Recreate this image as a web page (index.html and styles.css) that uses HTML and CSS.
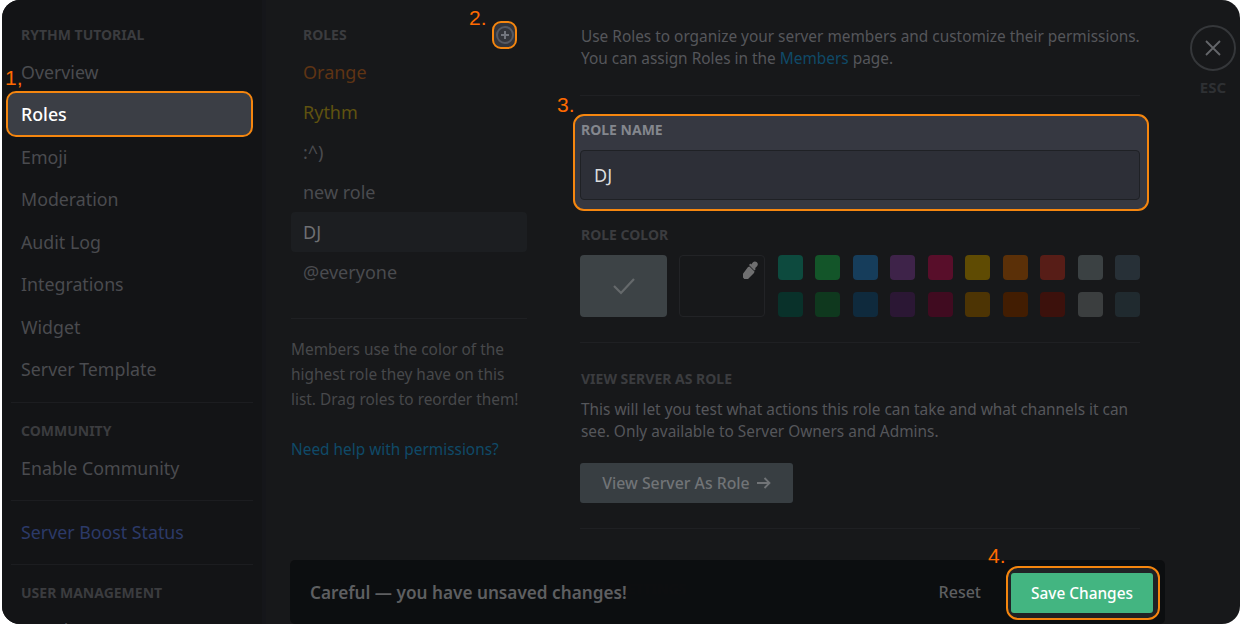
FILE: index.html
```
<html>
<head>
    <title>Server Settings</title>
    <link rel="stylesheet" href="styles.css">
</head>
<body>
    <div class="app">
        <nav class="sidebar">
            <div class="nav-group">
                <h2 class="heading nav-heading">RYTHM TUTORIAL</h2>
                <a class="nav-item">Overview</a>
                <a class="nav-item active">Roles</a>
                <a class="nav-item">Emoji</a>
                <a class="nav-item">Moderation</a>
                <a class="nav-item">Audit Log</a>
                <a class="nav-item">Integrations</a>
                <a class="nav-item">Widget</a>
                <a class="nav-item">Server Template</a>
            </div>
            <div class="nav-group">
                <h2 class="heading nav-heading">COMMUNITY</h2>
                <a class="nav-item">Enable Community</a>
            </div>
            <div class="nav-group">
                <a class="nav-item boost">Server Boost Status</a>
            </div>
            <div class="nav-group">
                <h2 class="heading nav-heading">USER MANAGEMENT</h2>
                <a class="nav-item">Members</a>
            </div>
        </nav>
        <div class="scroll-strip"></div>

        <section class="roles">
            <div class="roles-head">
                <h2 class="heading">ROLES</h2>
                <button class="add-role">
                    <svg width="20" height="20" viewBox="0 0 20 20">
                        <circle cx="10" cy="10" r="8" fill="none" stroke="#565962" stroke-width="2"/>
                        <path d="M10 6v8M6 10h8" stroke="#72757e" stroke-width="2"/>
                    </svg>
                </button>
            </div>
            <ul class="role-list">
                <li class="role-orange">Orange</li>
                <li class="role-gold">Rythm</li>
                <li>:^)</li>
                <li>new role</li>
                <li class="selected">DJ</li>
                <li>@everyone</li>
            </ul>
            <p class="roles-help">Members use the color of the highest role they have on this list. Drag roles to reorder them!</p>
            <a class="help-link">Need help with permissions?</a>
        </section>

        <main class="content">
            <p class="intro">Use Roles to organize your server members and customize their permissions. You can assign Roles in the <a class="link">Members</a> page.</p>

            <div class="name-box">
                <h2 class="heading name-label">ROLE NAME</h2>
                <div class="name-input">DJ</div>
            </div>

            <h2 class="heading color-label">ROLE COLOR</h2>
            <div class="color-row">
                <div class="color-default">
                    <svg width="24" height="18" viewBox="0 0 24 18">
                        <path d="M2 9l7 7L22 2" fill="none" stroke="#65696b" stroke-width="2.200"/>
                    </svg>
                </div>
                <div class="color-custom">
                    <svg class="dropper" width="18" height="18" viewBox="0 0 18 18">
                        <path d="M11 1.200c1-1 2.600-1.200 3.900.1s1.100 2.900.1 3.900l-2 2 .8.8-1.400 1.400-5.400-5.400 1.400-1.400.8.8zM6 6l1.500-.5 5 5-.5 1.500-6.200 6.200H2.500L1 16.500v-3.800z" fill="#6f6f70"/>
                    </svg>
                </div>
                <div class="swatches">
                    <span class="swatch" style="background:#0d4a3e"></span>
                    <span class="swatch" style="background:#135529"></span>
                    <span class="swatch" style="background:#163d5b"></span>
                    <span class="swatch" style="background:#3e2349"></span>
                    <span class="swatch" style="background:#580e2a"></span>
                    <span class="swatch" style="background:#5f4b03"></span>
                    <span class="swatch" style="background:#5b3008"></span>
                    <span class="swatch" style="background:#571d17"></span>
                    <span class="swatch" style="background:#3b4143"></span>
                    <span class="swatch" style="background:#273037"></span>
                    <span class="swatch" style="background:#09312a"></span>
                    <span class="swatch" style="background:#0f381e"></span>
                    <span class="swatch" style="background:#0f2a3d"></span>
                    <span class="swatch" style="background:#2b1734"></span>
                    <span class="swatch" style="background:#400b20"></span>
                    <span class="swatch" style="background:#4d3404"></span>
                    <span class="swatch" style="background:#421d02"></span>
                    <span class="swatch" style="background:#3c110c"></span>
                    <span class="swatch" style="background:#3b3e3f"></span>
                    <span class="swatch" style="background:#202a2f"></span>
                </div>
            </div>

            <div class="view-as">
                <h2 class="heading">VIEW SERVER AS ROLE</h2>
                <p class="view-text">This will let you test what actions this role can take and what channels it can see. Only available to Server Owners and Admins.</p>
                <button class="view-btn">
                    View Server As Role
                    <svg width="14" height="12" viewBox="0 0 14 12">
                        <path d="M0 6h12.500M7.500 1l5 5-5 5" fill="none" stroke="#717477" stroke-width="1.800"/>
                    </svg>
                </button>
            </div>

            <h2 class="heading settings-label">ROLE SETTINGS</h2>
        </main>

        <aside class="esc">
            <div class="esc-circle">
                <svg width="18" height="18" viewBox="0 0 18 18">
                    <path d="M2 2l14 14M16 2L2 16" stroke="#64666a" stroke-width="1.800"/>
                </svg>
            </div>
            <span class="esc-text">ESC</span>
        </aside>

        <div class="save-bar">
            <span class="save-msg">Careful — you have unsaved changes!</span>
            <span class="reset">Reset</span>
            <div class="save-ring"><button class="save-btn">Save Changes</button></div>
        </div>

        <span class="note note-1">1,</span>
        <span class="note note-2">2.</span>
        <span class="note note-3">3.</span>
        <span class="note note-4">4.</span>
    </div>
</body>
</html>
```

FILE: styles.css
```
* {
    box-sizing: border-box;
}
html, body {
    margin: 0;
    padding: 0;
    height: 100%;
    background: #fff;
    overflow: hidden;
}
body {
    font-family: "Noto Sans", sans-serif;
    padding: 0 2px;
}
h2, p, ul {
    margin: 0;
    padding: 0;
}
.app {
    position: relative;
    display: flex;
    width: 1238px;
    height: 624px;
    background: #17181a;
    border-radius: 18px;
    overflow: hidden;
}
.heading {
    font-size: 14px;
    line-height: 16px;
    font-weight: 700;
    color: #3b3c3f;
    white-space: nowrap;
}

/* left nav */
.sidebar {
    width: 260px;
    flex: none;
    background: #131416;
    padding: 27px 9px 0 9px;
    overflow: hidden;
}
.nav-group {
    border-bottom: 1px solid #1c1d20;
    padding-bottom: 7px;
    margin-bottom: 20px;
}
.nav-heading {
    padding-left: 10px;
    margin-bottom: 12px;
}
.nav-item {
    display: flex;
    align-items: center;
    height: 34px;
    margin-bottom: 8.500px;
    padding-left: 10px;
    font-size: 17.800px;
    color: #4a4b4f;
    white-space: nowrap;
}
.nav-item.active {
    height: 46px;
    margin: -7px 0 3.200px -5px;
    padding-left: 13px;
    color: #fff;
    font-weight: 500;
    background: #3b3e45;
    border: 2px solid #f5860f;
    border-radius: 10px;
}
.nav-item.boost {
    margin-top: -6px;
    margin-bottom: 7.500px;
    color: #2c3a68;
}
.scroll-strip {
    width: 4px;
    flex: none;
    background: #15161a;
}

/* roles column */
.roles {
    width: 261px;
    flex: none;
    padding: 27px 0 0 25px;
}
.roles-head {
    position: relative;
    padding-left: 12px;
    margin-bottom: 9px;
}
.add-role {
    position: absolute;
    left: 201px;
    top: -6px;
    width: 25px;
    height: 28px;
    padding: 0;
    display: flex;
    align-items: center;
    justify-content: center;
    background: #33353c;
    border: 2px solid #f5860f;
    border-radius: 9px;
}
.role-list {
    list-style: none;
    border-bottom: 1px solid #1f2023;
    padding-bottom: 26px;
    width: 236px;
}
.role-list li {
    height: 40px;
    line-height: 40px;
    padding-left: 12px;
    font-size: 18px;
    color: #4a4b4f;
}
.role-list .selected {
    background: #1c1e21;
    border-radius: 4px;
    color: #6e6f72;
}
.role-list .role-orange {
    color: #5f3414;
}
.role-list .role-gold {
    color: #5f5210;
}
.roles-help {
    width: 236px;
    margin-top: 18px;
    font-size: 15.400px;
    line-height: 25px;
    color: #47484b;
}
.help-link {
    display: block;
    margin-top: 25px;
    font-size: 15.400px;
    line-height: 25px;
    color: #0f4a68;
    white-space: nowrap;
}

/* main column */
.content {
    width: 560px;
    flex: none;
    padding-top: 26px;
    margin-left: 53px;
}
.intro {
    font-size: 15.400px;
    line-height: 22px;
    color: #55565a;
    padding-bottom: 25px;
    border-bottom: 1px solid #1f2023;
    margin-bottom: 18px;
}
.link {
    color: #0f4a68;
}
.name-box {
    margin: 0 -9px 0 -7px;
    padding: 6px 7px 10px 5px;
    height: 97px;
    background: #363841;
    border: 2px solid #f5860f;
    border-radius: 11px;
}
.name-label {
    padding-left: 1px;
    color: #84878e;
    margin-bottom: 12px;
}
.name-input {
    height: 50px;
    line-height: 48px;
    padding-left: 13px;
    font-size: 18px;
    color: #dcddde;
    background: #2d2f37;
    border: 1px solid #1f2125;
    border-radius: 4px;
}
.color-label {
    padding-left: 1px;
    margin-top: 16px;
    margin-bottom: 12px;
}
.color-row {
    display: flex;
    padding-bottom: 25px;
    border-bottom: 1px solid #1f2023;
}
.color-default {
    width: 87px;
    height: 62px;
    display: flex;
    align-items: center;
    justify-content: center;
    background: #3d4346;
    border-radius: 4px;
}
.color-custom {
    position: relative;
    width: 86px;
    height: 62px;
    margin: 0 13px 0 12px;
    border: 1px solid #222326;
    border-radius: 4px;
}
.dropper {
    position: absolute;
    top: 5px;
    right: 4px;
}
.swatches {
    flex: 1;
    display: grid;
    grid-template-columns: repeat(10, 25px);
    grid-auto-rows: 25px;
    row-gap: 12px;
    justify-content: space-between;
}
.swatch {
    border-radius: 4px;
}
.view-as {
    padding-top: 28px;
    padding-bottom: 25px;
    border-bottom: 1px solid #1f2023;
}
.view-as .heading,
.view-text,
.intro {
    padding-left: 1px;
}
.view-text {
    margin-top: 12px;
    font-size: 15.400px;
    line-height: 22px;
    color: #55565a;
}
.view-btn {
    display: flex;
    align-items: center;
    justify-content: center;
    gap: 7px;
    width: 213px;
    height: 40px;
    margin-top: 20px;
    padding: 0;
    border: none;
    border-radius: 3px;
    font-family: inherit;
    font-size: 15.800px;
    font-weight: 500;
    color: #717477;
    background: #383e42;
}
.settings-label {
    margin-top: 52px;
    color: #1c1d20;
}

/* esc */
.esc {
    flex: 1;
    padding: 25px 0 0 50px;
}
.esc-circle {
    width: 46px;
    height: 46px;
    display: flex;
    align-items: center;
    justify-content: center;
    border: 2px solid #35373a;
    border-radius: 50%;
}
.esc-text {
    display: block;
    width: 46px;
    margin-top: 6px;
    text-align: center;
    font-size: 15px;
    font-weight: 700;
    color: #2e3033;
}

/* unsaved bar, lies over the page */
.save-bar {
    position: absolute;
    left: 288px;
    top: 560px;
    width: 875px;
    height: 64px;
    display: flex;
    align-items: center;
    padding: 0 5px 0 20px;
    background: rgba(13, 14, 16, 0.96);
    border-radius: 5px;
}
.save-msg {
    flex: 1;
    font-size: 17.200px;
    font-weight: 600;
    color: #5e5f61;
}
.reset {
    font-size: 16px;
    font-weight: 500;
    color: #5e5f61;
    margin-right: 25px;
}
.save-ring {
    width: 154px;
    height: 54px;
    margin-top: 2px;
    padding: 5px 5px 5px 3px;
    display: flex;
    background: #202225;
    border: 2px solid #f5860f;
    border-radius: 12px;
}
.save-btn {
    flex: 1;
    padding: 0;
    border: none;
    border-radius: 3px;
    font-family: inherit;
    font-size: 15.400px;
    font-weight: 500;
    color: #fff;
    background: #43b581;
}

/* tutorial numbers */
.note {
    position: absolute;
    font-family: "Liberation Sans", sans-serif;
    font-size: 21px;
    line-height: 24px;
    color: #ff6a00;
}
.note-1 { left: 3px; top: 66px; }
.note-2 { left: 467px; top: 6px; }
.note-3 { left: 555px; top: 93px; }
.note-4 { left: 986px; top: 544px; }
```
